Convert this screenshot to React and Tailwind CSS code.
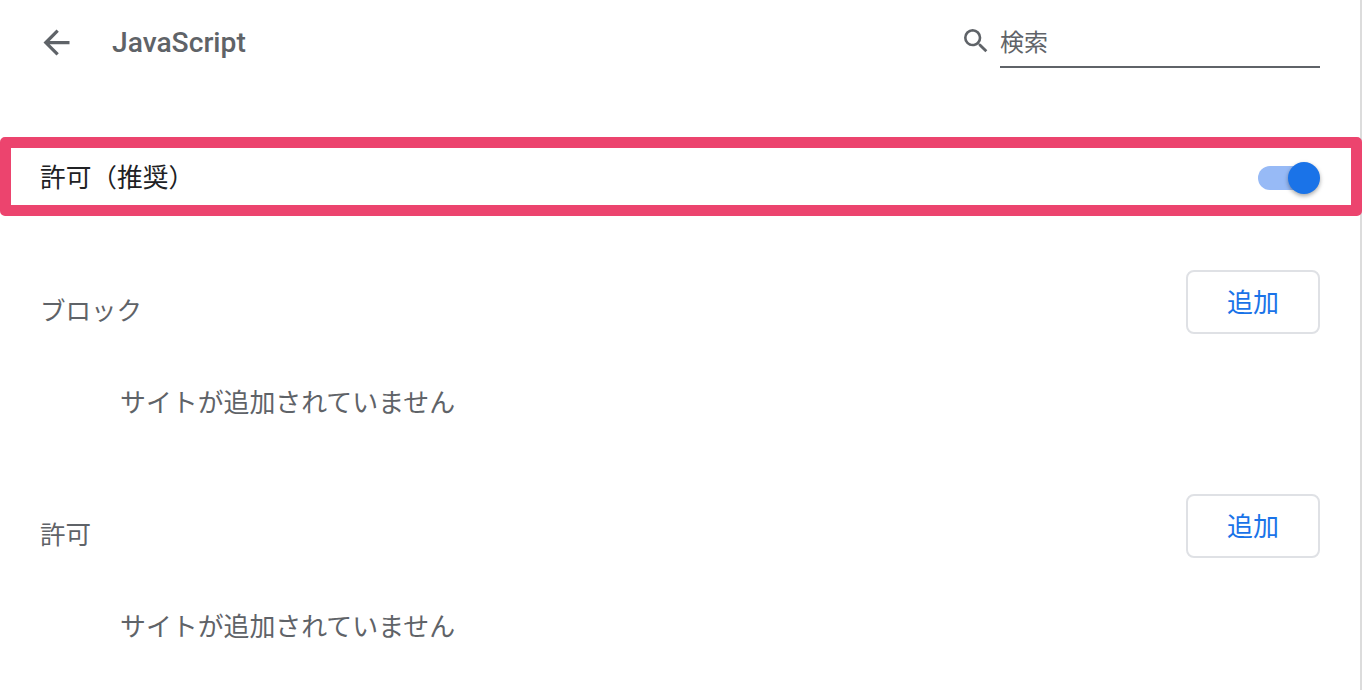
const cjk = 'font-["Roboto","Noto_Sans_CJK_JP",sans-serif]';

function SiteList({ label, className }) {
  return (
    <section className={className}>
      <div className="flex h-[64px] items-center justify-between pl-[40px] pr-[40px]">
        <h2 className="mt-[18px] text-[25.5px] leading-[36px] text-[#5f6368]">{label}</h2>
        <button className="h-[64px] w-[134px] rounded-[8px] border-2 border-[#dfe1e5] bg-white pt-[2px] text-[26px] text-[#1a73e8]">
          追加
        </button>
      </div>
      <p className="mt-[50px] pl-[120px] pt-[1px] text-[25.9px] leading-[36px] text-[#5f6368]">
        サイトが追加されていません
      </p>
    </section>
  );
}

export default function App() {
  return (
    <div className={`${cjk} h-[690px] w-full border-r-2 border-[#dcdcdc] bg-white`}>
      <header className="flex h-[137px] items-start justify-between pl-[37px] pr-[40px] pt-[24px]">
        <div className="flex h-[36px] items-center">
          <svg width="39" height="39" viewBox="0 0 24 24" className="shrink-0 fill-[#5f6368]">
            <path d="M20 11H7.83l5.59-5.59L12 4l-8 8 8 8 1.41-1.41L7.83 13H20v-2z" />
          </svg>
          <h1 className="ml-[36px] mt-[1px] text-[28.2px] font-medium leading-[36px] text-[#5f6368]">JavaScript</h1>
        </div>
        <div className="flex items-start">
          <svg width="32" height="32" viewBox="0 0 24 24" className="mr-[8px] mt-[1px] fill-[#5f6368]">
            <path d="M15.5 14h-.79l-.28-.27A6.47 6.47 0 0 0 16 9.5 6.5 6.5 0 1 0 9.5 16c1.61 0 3.09-.59 4.23-1.57l.27.28v.79l5 4.99L20.49 19l-4.99-5zm-6 0C7.01 14 5 11.99 5 9.5S7.01 5 9.5 5 14 7.01 14 9.5 11.99 14 9.5 14z" />
          </svg>
          <div className="h-[44px] w-[320px] border-b-2 border-[#5f6368] pt-[1px] text-[24px] leading-[36px] text-[#5f6368]">検索</div>
        </div>
      </header>

      <div className="mr-[-2px] flex h-[79px] items-center justify-between rounded-[5px] border-[11px] border-[#ec446e] bg-white pl-[29px] pr-[31px]">
        <span className="mt-[3px] text-[25.7px] leading-[36px] text-[#202124]">許可（推奨）</span>
        <div className="relative mt-[3px] h-[24px] w-[62px]">
          <div className="h-[24px] w-[56px] rounded-full bg-[#97baf6]" />
          <div className="absolute right-0 top-[-4px] h-[32px] w-[32px] rounded-full bg-[#1a73e8] shadow-[0_2px_4px_rgba(0,0,0,0.35)]" />
        </div>
      </div>

      <SiteList label="ブロック" className="pt-[54px]" />
      <SiteList label="許可" className="pt-[73px]" />
    </div>
  );
}
